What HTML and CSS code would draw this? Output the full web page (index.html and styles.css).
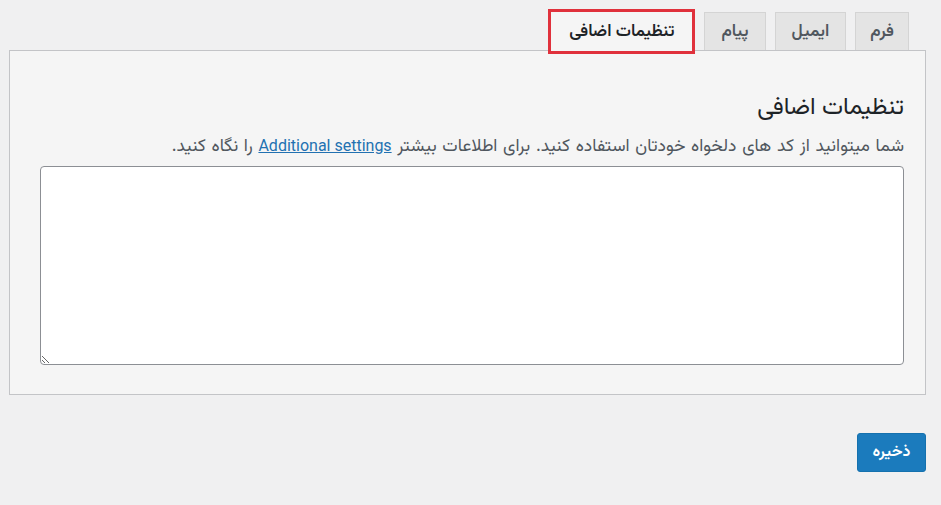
FILE: index.html
```html
<!DOCTYPE html>
<html lang="fa" dir="rtl">
<head>
<meta charset="utf-8">
<title>تنظیمات اضافی</title>
<link rel="stylesheet" href="styles.css">
</head>
<body>
<div class="wrap">
  <nav class="tabs">
    <a class="tab">فرم</a>
    <a class="tab">ایمیل</a>
    <a class="tab">پیام</a>
    <a class="tab active">تنظیمات اضافی</a>
  </nav>
  <section class="panel">
    <h2 class="title">تنظیمات اضافی</h2>
    <p class="desc">شما میتوانید از کد های دلخواه خودتان استفاده کنید. برای اطلاعات بیشتر <a class="link" href="#">Additional settings</a> را نگاه کنید.</p>
    <textarea class="box"></textarea>
  </section>
  <div class="actions">
    <button class="save" type="button">ذخیره</button>
  </div>
</div>
</body>
</html>
```
FILE: styles.css
```css
html, body {
  margin: 0;
  padding: 0;
  background: #f0f0f1;
  font-family: "Vazirmatn", "Noto Sans Arabic", "DejaVu Sans", sans-serif;
  color: #1d2327;
}

.wrap {
  padding: 12px 15px 0 9px;
}

.tabs {
  display: flex;
  align-items: flex-end;
  gap: 9px;
  padding-right: 17px;
}

.tab {
  display: flex;
  align-items: center;
  justify-content: center;
  height: 38px;
  padding: 0 16px;
  box-sizing: border-box;
  background: #e4e4e4;
  border: 1px solid #d4d4d4;
  border-bottom: none;
  color: #50575e;
  font-size: 17px;
  font-weight: 600;
  text-decoration: none;
}

.tab:first-child {
  padding: 0 14px;
}

.tab.active {
  position: relative;
  z-index: 1;
  background: #f5f5f5;
  color: #1d2327;
  height: 39px;
  margin-bottom: -1px;
  padding: 0 18px;
  margin-right: 3px;
  outline: 3px solid #e0313c;
  outline-offset: 0;
  border: none;
}

.panel {
  background: #f5f5f5;
  border: 1px solid #c3c4c7;
  padding: 42px 21px 29px 30px;
}

.title {
  margin: 0;
  font-size: 24px;
  font-weight: 400;
  line-height: 30px;
  color: #1d2327;
}

.desc {
  margin: 12px 0 8px;
  font-size: 17.5px;
  line-height: 22px;
  word-spacing: 1px;
  color: #50575e;
}

.link {
  color: #2271b1;
  text-decoration: underline;
  font-family: Roboto, "Liberation Sans", sans-serif;
  font-size: 16px;
  word-spacing: 0;
}

.box {
  display: block;
  width: 100%;
  height: 199px;
  box-sizing: border-box;
  background: #fff;
  border: 1px solid #8c8f94;
  border-radius: 4px;
  margin: 0;
  resize: vertical;
}

.actions {
  display: flex;
  padding-top: 38px;
}

.save {
  width: 69px;
  height: 39px;
  background: #1b7bbd;
  border: 1px solid #1571ae;
  border-radius: 3px;
  color: #fff;
  font-family: "Vazirmatn", "Noto Sans Arabic", "DejaVu Sans", sans-serif;
  font-size: 16px;
  font-weight: 600;
  cursor: pointer;
}
```
